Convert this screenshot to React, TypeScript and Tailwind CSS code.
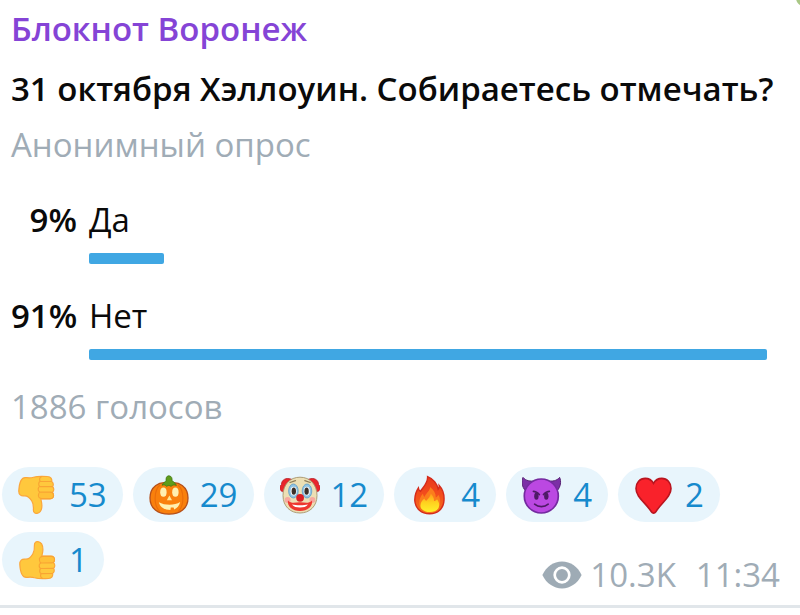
import React from 'react';

type Option = {
    id: string;
    percent: number;
    label: string;
    fill: number;
}

type Reaction = {
    name: string;
    count: number;
    icon: React.ReactNode;
}

const ThumbShape = () => (
    <>
        <path d="M1.8 24.5 C1.5 20.5 4 18.6 7.5 19.2 C10.5 19.4 13 17 14.8 14 C16.4 11.4 16.6 8.5 16.4 5.5 C16.2 2.6 18 1.2 20 1.6 C23.4 2.2 24.9 5.6 24.9 9.4 C24.9 12 24.2 14 23.8 16.2 L33 16.2 C35.6 16.2 36.8 18 36.5 20 C36.4 21.2 36 22 35.4 22.6 C37.4 24.4 37 27 35.6 28.2 C36.8 30.2 36.3 32.4 34.6 33.4 C35.4 36 33.6 38.4 30.6 38.5 C26 38.8 20.5 39 16.5 37.8 C13.5 36.8 11.5 37.2 8.5 37.4 C4 37.6 2.2 31 1.8 24.5 Z" fill="#ffc83d" stroke="#fba63a" strokeWidth="1.2" />
        <path d="M21.5 20.5 C20.6 17.5 23 16.4 25 16.4 L33 16.4 C35.6 16.4 36.8 18 36.4 20.2 C36.2 22 35 22.9 33.2 22.9 L23.6 23 C22.2 22.8 21.6 21.8 21.5 20.5 Z" fill="#ffc038" stroke="#f9a433" strokeWidth="1.1" />
        <path d="M22.5 23.2 C20.6 24.2 20.8 27.6 22.6 28.5 C21.2 30 21.4 32.8 23.2 33.7 C22 35.2 22.6 37.6 24.4 38.4 M22.8 28.5 L35 28.3 M23.4 33.7 L34 33.5" fill="none" stroke="#f9a433" strokeWidth="1.2" strokeLinecap="round" />
    </>
);

const ThumbUp = () => (
    <svg viewBox="0 0 40 40" className="size-10 shrink-0" aria-hidden="true">
        <ThumbShape />
    </svg>
);

const ThumbDown = () => (
    <svg viewBox="0 0 40 40" className="size-10 shrink-0" aria-hidden="true">
        <g transform="matrix(1 0 0 -1 -1 40)">
            <ThumbShape />
        </g>
    </svg>
);

const Pumpkin = () => (
    <svg viewBox="0 0 40 40" className="size-10 shrink-0" aria-hidden="true">
        <path d="M20 8.5 C30 5.5 39 12 39 23 C39 33.5 31 39.2 20 39.2 C9 39.2 1 33.5 1 23 C1 12 10 5.5 20 8.5 Z" fill="#f9800c" stroke="#b5501a" strokeWidth="1.3" />
        <path d="M11 10 C5 15 4 30 11 36.6 M29 10 C35 15 36 30 29 36.6" fill="none" stroke="#ea6c0a" strokeWidth="1.1" />
        <path d="M13 10.2 C14.5 7.6 16 6.6 17.2 6 C16.6 3.2 17.6 .6 20 .8 C22.6 1 23.4 3.4 23 5.8 C24.8 6.6 26.4 8.4 27.4 10.4 C24.8 9.6 23.4 10 22 11.4 C20.6 10.2 19 10.2 17.6 11.4 C16.4 9.8 15 9.6 13 10.2 Z" fill="#5f9c1b" stroke="#417814" strokeWidth=".8" />
        <ellipse cx="14.4" cy="17.2" rx="3.2" ry="4.6" fill="#fff0b0" />
        <ellipse cx="26.4" cy="17.2" rx="3.2" ry="4.6" fill="#fff0b0" />
        <path d="M20.4 20.6 L17.8 25.2 L23 25.2 Z" fill="#ffe592" />
        <path d="M9.8 27.2 C16 30.6 25.6 30.6 31.2 27 C30.4 30.8 28 33.4 25.2 34.4 L24.6 32.4 L21.8 32.6 L21.4 35 C15.6 35 11.2 32.4 9.8 27.2 Z" fill="#fff0b0" />
    </svg>
);

const Clown = () => (
    <svg viewBox="0 0 40 40" className="size-10 shrink-0" aria-hidden="true">
        <path d="M12 4.5 C6 1.8 1.4 5 1.5 9.5 C-1 11.5 -.6 15.6 2.6 16.6 L8 15 Z" fill="#e8252b" stroke="#b81d25" strokeWidth=".8" />
        <path d="M28 4.5 C34 1.8 38.6 5 38.5 9.5 C41 11.5 40.6 15.6 37.4 16.6 L32 15 Z" fill="#e8252b" stroke="#b81d25" strokeWidth=".8" />
        <path d="M20 2.2 C30 2.2 37 9.5 37 20.5 C37 31.5 29.5 38 20 38 C10.5 38 3 31.5 3 20.5 C3 9.5 10 2.2 20 2.2 Z" fill="#ecdfb4" stroke="#a6946c" strokeWidth=".9" />
        <ellipse cx="13.4" cy="16" rx="4.8" ry="7" fill="#8fc4e4" stroke="#5e9cc6" strokeWidth=".8" />
        <ellipse cx="27" cy="16" rx="4.8" ry="7" fill="#8fc4e4" stroke="#5e9cc6" strokeWidth=".8" />
        <ellipse cx="13.6" cy="16.2" rx="3" ry="4.4" fill="#fff" />
        <ellipse cx="26.8" cy="16.2" rx="3" ry="4.4" fill="#fff" />
        <ellipse cx="13.8" cy="16.2" rx="2.2" ry="3.6" fill="#3c3029" />
        <ellipse cx="26.6" cy="16.2" rx="2.2" ry="3.6" fill="#3c3029" />
        <path d="M10 7.5 L15.5 5.6 M30.2 7.5 L24.8 5.6" stroke="#8d7b57" strokeWidth="1.2" strokeLinecap="round" />
        <circle cx="7.6" cy="25" r="3" fill="#f6a9a0" />
        <circle cx="32.4" cy="25" r="3" fill="#f6a9a0" />
        <path d="M8 25.4 C12 29.4 15.6 27 20 27.2 C24.4 27 28 29.4 32 25.4 C33 31.5 27.4 36 20 36 C12.6 36 7 31.5 8 25.4 Z" fill="#ee382f" />
        <path d="M12 29.6 C16 30.6 24 30.6 28 29.6 C26.2 32 23.4 32.6 20 32.6 C16.6 32.6 13.8 32 12 29.6 Z" fill="#fff" />
        <circle cx="20.1" cy="22.8" r="3.9" fill="#dc1f26" />
    </svg>
);

const Fire = () => (
    <svg viewBox="0 0 40 40" className="size-10 shrink-0" aria-hidden="true">
        <defs>
            <linearGradient id="flame" x1="0" y1="0" x2="0" y2="1">
                <stop offset="0" stopColor="#e8361c" />
                <stop offset=".55" stopColor="#f4511c" />
                <stop offset="1" stopColor="#f5741b" />
            </linearGradient>
            <linearGradient id="flameCore" x1="0" y1="0" x2="0" y2="1">
                <stop offset="0" stopColor="#ff9a1a" />
                <stop offset=".5" stopColor="#ffd21f" />
                <stop offset="1" stopColor="#fff02b" />
            </linearGradient>
        </defs>
        <path d="M17.6 1.6 C23 3.6 27.4 9 28.2 14.2 C29.2 13.2 29.4 11.8 29.2 10.4 C32.6 14 34.4 19.4 34 25.4 C33.6 33.6 27.6 38.8 19.6 38.8 C11.4 38.8 5.4 33.4 4.8 25.8 C4.6 20.8 6 16.6 8.4 13 C8.6 14.8 9.2 15.8 10.4 16.4 C13.4 11.8 18 7.8 17.6 1.6 Z" fill="url(#flame)" stroke="#d52b1b" strokeWidth="1.4" />
        <path d="M20 12 C20.4 15.4 16 18 14.4 22 C13.4 20.8 13 19.6 13 18.6 C9.6 22.6 7.6 28.4 10.6 33 C15 38.6 25 38.4 28.6 32.8 C31.2 28.4 30.4 22.6 28.2 19.8 C27.8 21.2 27 22 25.8 22.4 C25.8 18.4 23.8 15 20 12 Z" fill="#fb7d1c" />
        <path d="M20.8 18.5 C20.4 21.6 18.4 23.4 16.4 25.8 C15.4 25.2 14.8 24.6 14.4 23.4 C11 26 9.4 30.4 11.2 33.4 C15 38.2 25 38.4 28.4 33.2 C30 30 29 26.6 27 24.2 C26.2 25.4 25.2 26 24 26 C24 23 22.8 20.6 20.8 18.5 Z" fill="url(#flameCore)" />
    </svg>
);

const Devil = () => (
    <svg viewBox="0 0 40 40" className="size-10 shrink-0" aria-hidden="true">
        <path d="M3.6 16 C-.2 11.6 -.8 6.4 1 2.4 C4 6 8 6.4 13.4 6 Z" fill="#7c2fa6" stroke="#562073" strokeWidth="1" />
        <path d="M35 16 C38.8 11.6 39.4 6.4 37.6 2.4 C34.6 6 30.6 6.4 25.2 6 Z" fill="#7c2fa6" stroke="#562073" strokeWidth="1" />
        <circle cx="19.3" cy="21" r="17" fill="#bb48e2" stroke="#752aa0" strokeWidth="1.7" />
        <path d="M11.4 16.4 C13 16.4 16.2 17.8 17.4 19.6 M27.4 16.4 C25.8 16.4 22.6 17.8 21.4 19.6" fill="none" stroke="#4e1a66" strokeWidth="1.6" strokeLinecap="round" />
        <ellipse cx="14.4" cy="21.2" rx="2.2" ry="3.6" fill="#4e1a66" />
        <ellipse cx="24.3" cy="21.2" rx="2.2" ry="3.6" fill="#4e1a66" />
        <path d="M12.6 29.2 C16.4 32.4 22.4 32.4 26.2 29.2" fill="none" stroke="#4e1a66" strokeWidth="1.7" strokeLinecap="round" />
    </svg>
);

const Heart = () => (
    <svg viewBox="0 0 40 40" className="size-10 shrink-0" aria-hidden="true">
        <path d="M19.5 8.4 C17.6 5 14.6 3.4 11.2 3.4 C5.8 3.4 2 7.8 2 13.4 C2 22.2 11.6 27.6 17.4 36.8 C18.6 38.6 20.6 38.6 21.8 36.8 C27.4 27.6 37 22.2 37 13.4 C37 7.8 33.2 3.4 27.8 3.4 C24.4 3.4 21.4 5 19.5 8.4 Z" fill="#f9222b" stroke="#b9151f" strokeWidth="1.6" />
    </svg>
);

const Eye = () => (
    <svg viewBox="0 0 40 28" className="h-7 w-10 shrink-0" aria-hidden="true">
        <path d="M.4 14 C4.4 5.6 11.6 .6 20 .6 C28.4 .6 35.6 5.6 39.6 14 C35.6 22.4 28.4 27.4 20 27.4 C11.6 27.4 4.4 22.4 .4 14 Z" fill="#9eabb5" />
        <circle cx="20" cy="14" r="7.3" fill="#9eabb5" stroke="#fff" strokeWidth="2.7" />
    </svg>
);

const options: Option[] = [
    { id: 'yes', percent: 9, label: 'Да', fill: 11 },
    { id: 'no', percent: 91, label: 'Нет', fill: 100 },
];

const reactions: Reaction[] = [
    { name: 'Не нравится', count: 53, icon: <ThumbDown /> },
    { name: 'Тыква', count: 29, icon: <Pumpkin /> },
    { name: 'Клоун', count: 12, icon: <Clown /> },
    { name: 'Огонь', count: 4, icon: <Fire /> },
    { name: 'Дьявол', count: 4, icon: <Devil /> },
    { name: 'Сердце', count: 2, icon: <Heart /> },
    { name: 'Нравится', count: 1, icon: <ThumbUp /> },
];

const optionView = (option: Option) => {
    return (
        <li key={option.id} className="flex gap-3">
            <span className="w-[66px] shrink-0 text-right font-semibold">{option.percent}%</span>
            <div className="flex-1">
                <div>{option.label}</div>
                <div className="mt-[13px] h-[11px] rounded-xs bg-[#40a7e3]" style={{ width: `${option.fill}%` }}></div>
            </div>
        </li>
    );
}

const reactionView = (reaction: Reaction) => {
    return (
        <button key={reaction.name} type="button" title={reaction.name} className="flex h-[55px] items-center gap-[11px] rounded-full bg-[#e8f5fc] px-4 text-[#168acd]">
            {reaction.icon}
            <span>{reaction.count}</span>
        </button>
    );
}

export default function App(){
    return(
        <main className="relative overflow-hidden border-b-3 border-[#e1e6ea] bg-white pt-[9px] pb-[10px] font-['Open_Sans','Noto_Sans',sans-serif] text-[33px] leading-10 text-[#0a0a0a]">
            <span className="absolute -top-1 -right-1 h-[10px] w-2 rounded-bl-lg bg-[#a9c785]"></span>
            <div className="pl-[11px] pr-[33px]">
                <div className="font-semibold text-[#8544d6]">Блокнот Воронеж</div>
                <h1 className="mt-5 font-semibold whitespace-nowrap">31 октября Хэллоуин. Собираетесь отмечать?</h1>
                <div className="mt-4 text-[#a0acb6]">Анонимный опрос</div>
                <ul className="mt-[35px] flex flex-col gap-8">
                    {options.map(v => optionView(v))}
                </ul>
                <div className="mt-[27px] text-[#a0acb6]">1886 голосов</div>
            </div>
            <div className="mt-10 flex flex-wrap items-start gap-[10px] pl-[2px] pr-5">
                {reactions.map(v => reactionView(v))}
                <div className="mt-[23px] ml-auto flex items-center text-[#a0acb6]">
                    <Eye />
                    <span className="ml-2">10.3K</span>
                    <time className="ml-5">11:34</time>
                </div>
            </div>
        </main>
    )
}
